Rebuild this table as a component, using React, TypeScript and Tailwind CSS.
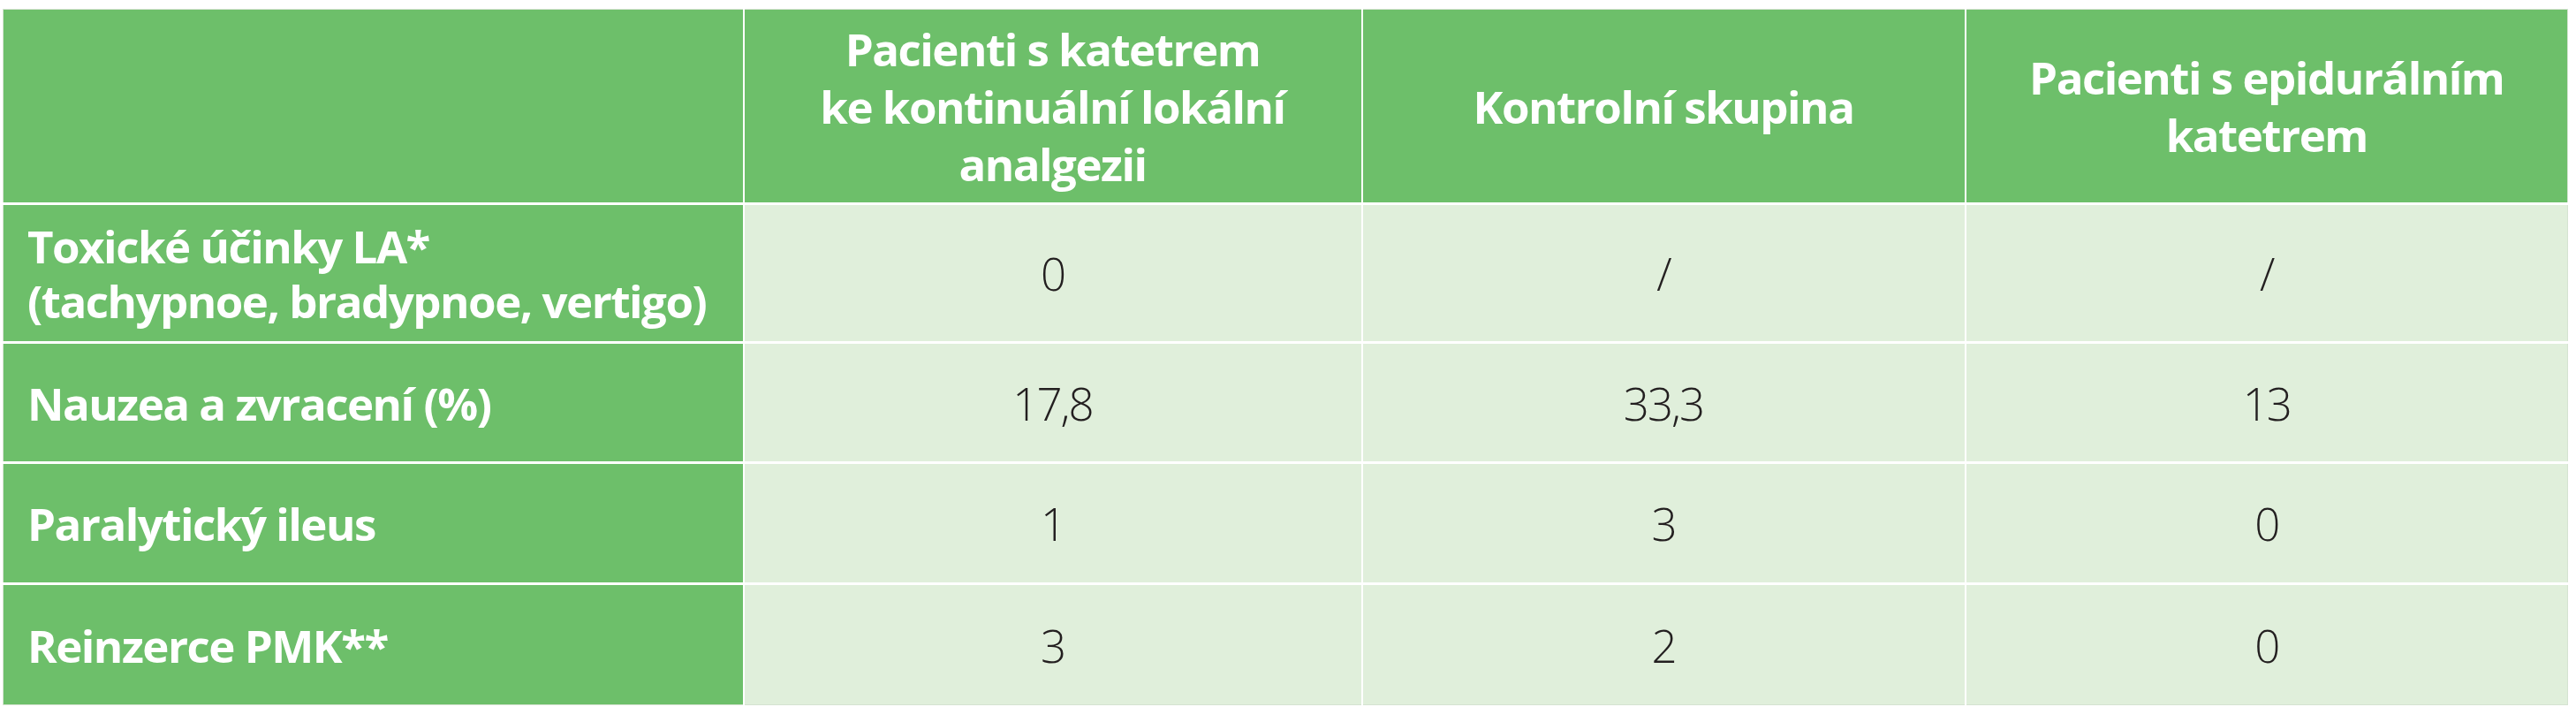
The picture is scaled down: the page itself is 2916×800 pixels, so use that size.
// Table of complications by patient group — green header column/row, light body cells.

const HEAD = "bg-[#6dbf6a] text-white font-bold";
const BODY = "bg-[#e0efdb] text-[#231f20] text-center";

const rows: { label: string[]; values: string[]; height: string }[] = [
  { label: ["Toxické účinky LA*", "(tachypnoe, bradypnoe, vertigo)"], values: ["0", "/", "/"], height: "h-[157px]" },
  { label: ["Nauzea a zvracení (%)"], values: ["17,8", "33,3", "13"], height: "h-[136px]" },
  { label: ["Paralytický ileus"], values: ["1", "3", "0"], height: "h-[137px]" },
  { label: ["Reinzerce PMK**"], values: ["3", "2", "0"], height: "h-[137px]" },
];

const headers: string[][] = [
  ["Pacienti s katetrem", "ke kontinuální lokální", "analgezii"],
  ["Kontrolní skupina"],
  ["Pacienti s epidurálním", "katetrem"],
];

export default function App() {
  return (
    <div className="min-h-[800px] w-[2916px] bg-white pl-[3px] pt-[10px] font-['Open_Sans',sans-serif]">
      <table className="w-[2903px] table-fixed border-collapse border border-[#d5e3d1]">
        <colgroup>
          <col className="w-[838px]" />
          <col className="w-[700px]" />
          <col className="w-[683px]" />
          <col className="w-[682px]" />
        </colgroup>
        <thead>
          <tr className="h-[220px]">
            <th className={`${HEAD} border-r-2 border-b-[3px] border-white`} />
            {headers.map((lines, i) => (
              <th
                key={i}
                className={`${HEAD} border-b-[3px] border-white px-4 text-center align-middle text-[51px] leading-[65px] tracking-[-1.5px] ${i < 2 ? "border-r-2" : ""}`}
              >
                {lines.map((l) => (
                  <div key={l}>{l}</div>
                ))}
              </th>
            ))}
          </tr>
        </thead>
        <tbody>
          {rows.map((r, ri) => (
            <tr key={ri} className={r.height}>
              <td
                className={`${HEAD} border-r-2 border-white pl-[27px] text-left align-middle text-[51px] leading-[62px] tracking-[-1.5px] ${ri < rows.length - 1 ? "border-b-[3px]" : ""}`}
              >
                {r.label.map((l) => (
                  <div key={l}>{l}</div>
                ))}
              </td>
              {r.values.map((v, vi) => (
                <td
                  key={vi}
                  className={`${BODY} border-white align-middle text-[51px] font-light leading-[60px] tracking-[-2px] ${vi < 2 ? "border-r-2" : ""} ${ri < rows.length - 1 ? "border-b-[3px]" : ""}`}
                >
                  {v}
                </td>
              ))}
            </tr>
          ))}
        </tbody>
      </table>
    </div>
  );
}
